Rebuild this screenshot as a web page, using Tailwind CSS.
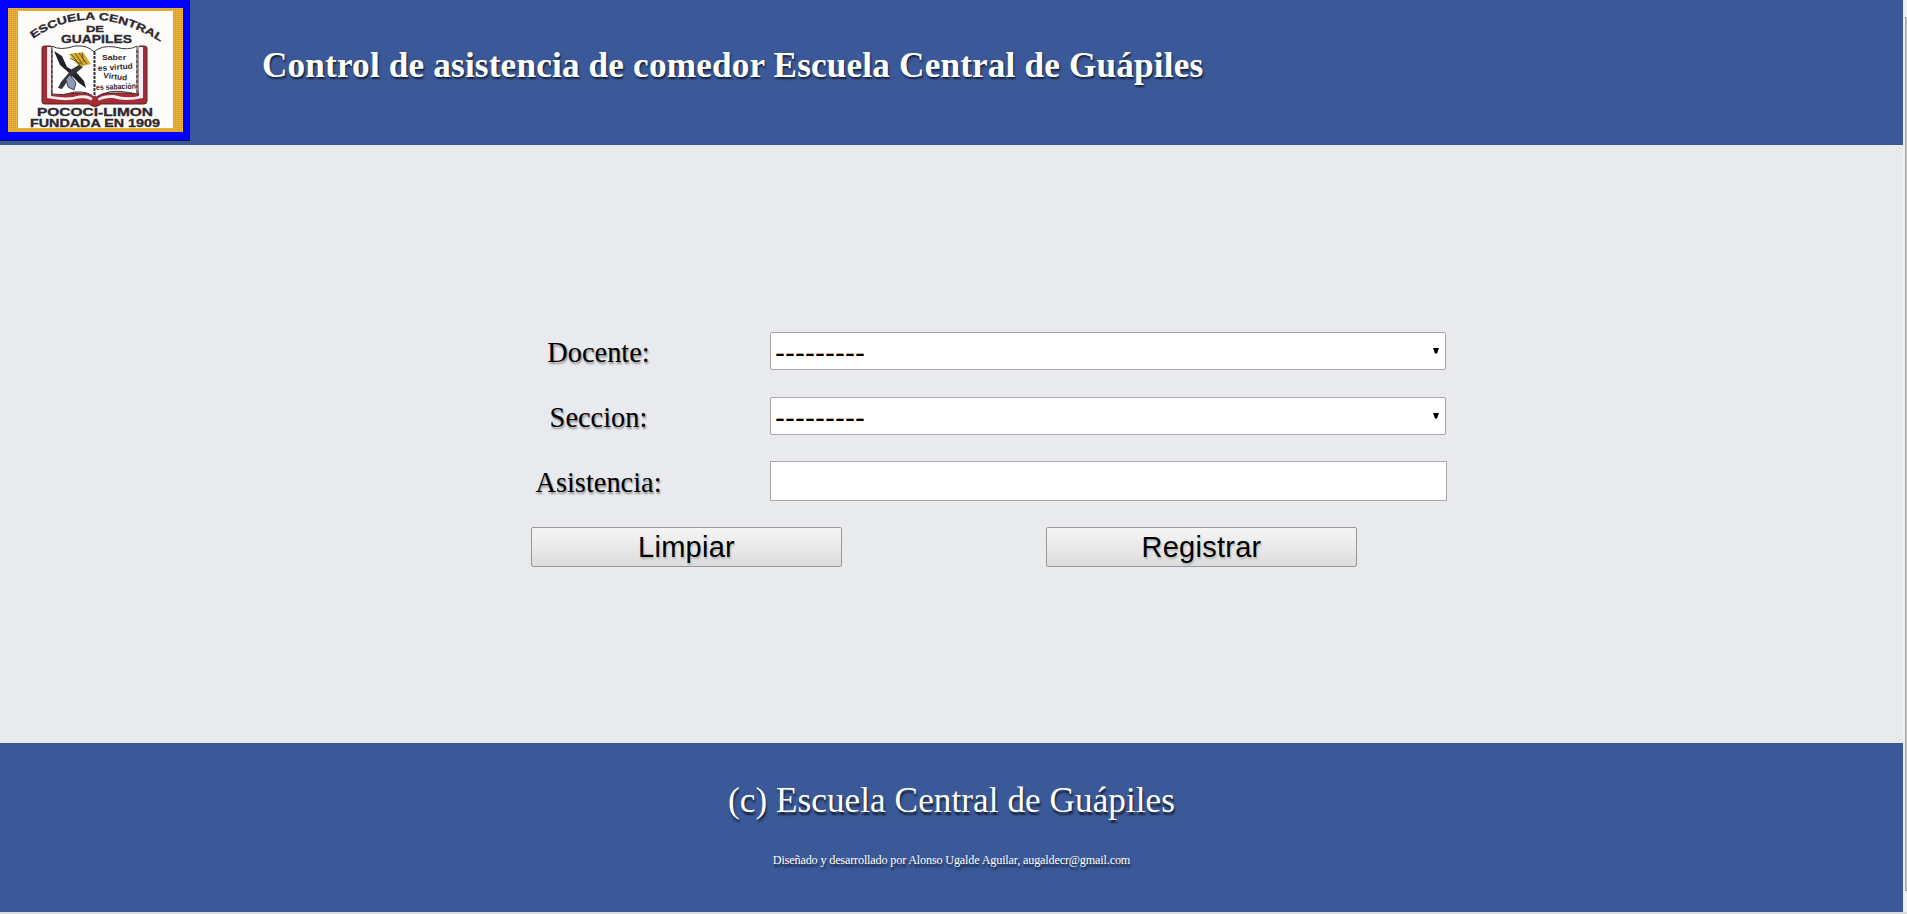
<!DOCTYPE html>
<html lang="es">
<head>
<meta charset="utf-8">
<title>Control de asistencia</title>
<script src="https://cdn.jsdelivr.net/npm/@tailwindcss/browser@4"></script>
</head>
<body class="h-[914px] w-[1907px] overflow-hidden bg-[#f1f1f1] font-['Liberation_Serif',serif] text-black">
<div class="flex h-[912px]">
  <div class="flex w-[1903px] flex-col bg-[#e9eaed]">
    <header class="flex h-[145px] items-start bg-[#3b5998]">
      <svg class="h-[141px] w-[190px] shrink-0" viewBox="0 0 190 141" font-family="Liberation Sans, sans-serif" font-weight="bold" fill="#2d272e">
        <defs>
          <pattern id="weave" width="2" height="2" patternUnits="userSpaceOnUse"><rect width="2" height="2" fill="#e2a83c"/><rect width="1" height="1" fill="#edb53a"/><rect x="1" y="1" width="1" height="1" fill="#d99c35"/></pattern>
          <path id="arc" d="M33 39Q92 -2 164 44"/>
        </defs>
        <rect width="190" height="141" fill="#00125c"/>
        <rect width="189" height="140" fill="#00f"/>
        <rect x="8" y="8" width="175" height="124" fill="url(#weave)"/>
        <rect x="18" y="11" width="155" height="117" fill="#fdfcfb"/>
        <text font-size="10.500" stroke="#2d272e" stroke-width=".3"><textPath href="#arc" textLength="136" lengthAdjust="spacingAndGlyphs">ESCUELA CENTRAL</textPath></text>
        <g stroke="#2d272e" stroke-width=".3">
        <text x="86" y="32" font-size="9.500" textLength="18" lengthAdjust="spacingAndGlyphs">DE</text>
        <text x="61" y="42.500" font-size="10" textLength="71" lengthAdjust="spacingAndGlyphs">GUAPILES</text>
        </g>
        <path d="M51 46H44Q42 46 42 49V102Q42 104 45 104H89Q95 109 101 104H144Q147 104 147 101V48Q147 46 144 46H139V93H51Z" fill="#a52b35" stroke="#59242b"/>
        <path d="M47 47H51V96Q69 99 79 95.500Q91 94 95 101Q101 94 114 95Q127 99 139 96V47H143V98Q125 102 113 98Q101 97 95 104Q90 97 78 98.500Q66 102 47 98Z" fill="#f5eff0"/>
        <path d="M52 46Q60 51 75 46Q88 45 94 52Q101 45 115 47Q129 51 137 46V94Q119 90 109 92Q99 94 95 98Q89 91 75 92Q63 96 52 94Z" fill="#fff" stroke="#3b333b"/>
        <path d="M90 102L95 95L100 102L95 106Z" fill="#a52b35"/>
        <path d="M94.500 52V96" stroke="#37303a" stroke-width="2" stroke-dasharray="3 1"/>
        <path d="M52 50V92M137 50V92" stroke="#37303a" stroke-dasharray="3 2"/>
        <path d="M69 54L83 52L91 64L79 67Z" fill="#d8ae30"/>
        <path d="M71 54L80 65M75 53L83 65M79 53L87 64M70 58L81 64M82 53L84 62" stroke="#6b531c"/>
        <path d="M54 51L62 56L67 67L76 72L84 81L86 88L79 83L68 72L60 65Z" fill="#242229"/>
        <path d="M79 65L72 69L61 82L58 88L62 89L69 79L83 67Z" fill="#34323a"/>
        <path d="M66 79L70 75L76 83L74 90L68 87Z" fill="#8d9bb0" stroke="#3d4555"/>
        <g font-size="8">
          <text x="102" y="60" textLength="24" lengthAdjust="spacingAndGlyphs">Saber</text>
          <text x="98" y="71" textLength="35" lengthAdjust="spacingAndGlyphs" transform="rotate(-4 98 71)">es virtud</text>
          <text x="103" y="78" textLength="24" lengthAdjust="spacingAndGlyphs" transform="rotate(6 103 78)">Virtud</text>
          <text x="96" y="90" textLength="40" lengthAdjust="spacingAndGlyphs" transform="rotate(-2 96 90)">es sabación</text>
        </g>
        <g stroke="#2d272e" stroke-width=".3">
        <text x="37" y="116" font-size="10.500" textLength="116" lengthAdjust="spacingAndGlyphs">POCOCI-LIMON</text>
        <text x="30" y="127" font-size="10.500" textLength="130" lengthAdjust="spacingAndGlyphs">FUNDADA EN 1909</text>
        </g>
      </svg>
      <h1 class="mt-[46px] ml-[72px] whitespace-nowrap text-[35.2px] leading-[40px] font-bold tracking-[0.17px] text-white [text-shadow:1px_2px_2px_rgba(0,0,0,0.65)]">Control de asistencia de comedor Escuela Central de Guápiles</h1>
    </header>
    <main class="h-[598px] pt-[187px] pl-[531px] text-[29px]">
      <div class="grid grid-cols-[135px_auto] gap-x-[104px] text-[28.4px]">
        <label class="h-[65px] pt-1 text-center leading-[34px] [text-shadow:1px_2px_2px_rgba(0,0,0,0.4)]">Docente:</label>
        <div class="flex h-[38px] w-[676px] items-center justify-between rounded-[2px] border border-[#a9a9a9] bg-white pr-1.5 pl-1 font-['Liberation_Sans',sans-serif] text-[30px]"><span class="pt-[3px]">---------</span><svg class="h-1.5 w-1.5" viewBox="0 0 6 6"><path d="M0 0H6L4 5.500H2Z"/></svg></div>
        <label class="h-[64px] pt-1 text-center leading-[34px] [text-shadow:1px_2px_2px_rgba(0,0,0,0.4)]">Seccion:</label>
        <div class="flex h-[38px] w-[676px] items-center justify-between rounded-[2px] border border-[#a9a9a9] bg-white pr-1.5 pl-1 font-['Liberation_Sans',sans-serif] text-[30px]"><span class="pt-[3px]">---------</span><svg class="h-1.5 w-1.5" viewBox="0 0 6 6"><path d="M0 0H6L4 5.500H2Z"/></svg></div>
        <label class="h-[66px] pt-[5px] text-center leading-[34px] [text-shadow:1px_2px_2px_rgba(0,0,0,0.4)]">Asistencia:</label>
        <input class="h-[40px] w-[677px] border border-[#a9a9a9] bg-white px-1">
      </div>
      <div class="flex gap-[204px] font-['Liberation_Sans',sans-serif] tracking-[0.25px]">
        <button class="h-[40px] w-[311px] rounded-[2px] border border-[#999] bg-linear-to-b from-[#f6f6f6] to-[#dcdcdc] leading-[38px] [text-shadow:1px_2px_2px_rgba(0,0,0,0.2)]">Limpiar</button>
        <button class="h-[40px] w-[311px] rounded-[2px] border border-[#999] bg-linear-to-b from-[#f6f6f6] to-[#dcdcdc] leading-[38px] [text-shadow:1px_2px_2px_rgba(0,0,0,0.2)]">Registrar</button>
      </div>
    </main>
    <footer class="h-[169px] bg-[#3b5998] pt-[38px] text-center text-white [text-shadow:1px_3px_2px_rgba(0,0,0,0.65)]">
      <p class="text-[35.2px] leading-[40px] tracking-[0.05px]">(c) Escuela Central de Guápiles</p>
      <p class="mt-[31px] text-[12.200px] leading-[16px] tracking-[-0.17px]">Diseñado y desarrollado por Alonso Ugalde Aguilar, augaldecr@gmail.com</p>
    </footer>
  </div>
  <div class="mt-[17px] ml-0.5 h-[874px] w-0.5 border-b border-l border-[#a8a8a8] bg-[#c1c1c1]"></div>
</div>
<div class="h-0.5 w-full bg-[#dcdcdc]"></div>
</body>
</html>
